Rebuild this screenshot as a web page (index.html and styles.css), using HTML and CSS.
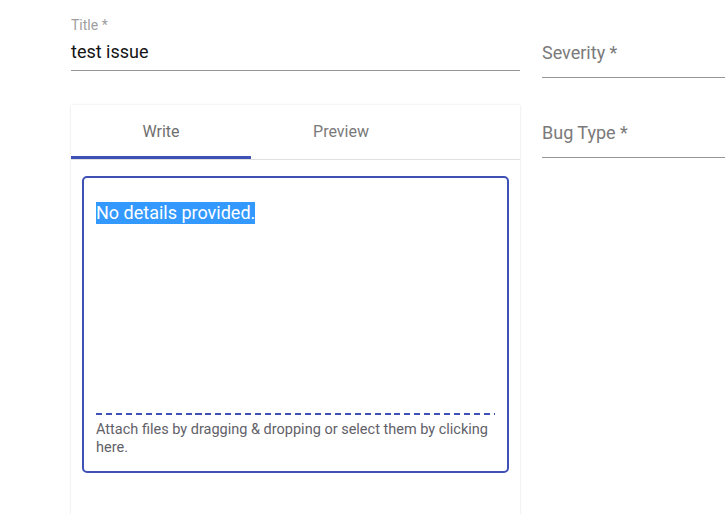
FILE: index.html
```html
<!DOCTYPE html>
<html lang="en">
<head>
<meta charset="utf-8">
<title>New issue</title>
<link rel="stylesheet" href="styles.css">
</head>
<body>
<div class="page">
  <div class="main-col">
    <div class="field title-field">
      <div class="field-label">Title *</div>
      <div class="field-input">test issue</div>
    </div>
    <div class="card">
      <div class="tabs">
        <div class="tab tab-active">Write</div>
        <div class="tab">Preview</div>
      </div>
      <div class="card-body">
        <div class="editor">
          <div class="editor-text"><span class="selected">No details provided.</span></div>
          <div class="dropzone">Attach files by dragging &amp; dropping or select them by clicking here.</div>
        </div>
      </div>
    </div>
  </div>
  <div class="side-col">
    <div class="select-field severity">Severity *</div>
    <div class="select-field bugtype">Bug Type *</div>
  </div>
</div>
</body>
</html>
```
FILE: styles.css
```css
html, body {
  margin: 0;
  padding: 0;
  background: #fff;
  overflow: hidden;
}
body {
  font-family: Roboto, "Noto Sans", "Liberation Sans", sans-serif;
  width: 725px;
  height: 514px;
}
.page {
  display: flex;
  gap: 22px;
  padding-left: 71px;
}
.main-col {
  flex: 0 0 449px;
  display: flex;
  flex-direction: column;
}
.side-col {
  flex: 0 0 300px;
  display: flex;
  flex-direction: column;
}
.title-field {
  padding-top: 17px;
}
.field-label {
  font-size: 14px;
  line-height: 17px;
  color: #9e9e9e;
}
.field-input {
  margin-top: 6px;
  font-size: 18px;
  line-height: 23px;
  color: #141414;
  padding-bottom: 7px;
  border-bottom: 1px solid #949494;
}
.select-field {
  font-size: 18px;
  line-height: 23px;
  color: #7a7a7a;
  padding-bottom: 13px;
  border-bottom: 1px solid #949494;
}
.severity {
  margin-top: 41px;
}
.bugtype {
  margin-top: 43px;
}
.card {
  margin-top: 34px;
  background: #fff;
  box-shadow: 0 0 2px rgba(0, 0, 0, 0.12), 0 1px 1px rgba(0, 0, 0, 0.06);
  height: 420px;
}
.tabs {
  display: flex;
  border-bottom: 1px solid #e0e0e0;
}
.tab {
  width: 180px;
  height: 49px;
  padding-top: 2px;
  display: flex;
  align-items: center;
  justify-content: center;
  font-size: 16px;
  color: #7a7a7a;
  border-bottom: 3px solid transparent;
}
.tab-active {
  border-bottom-color: #3f51b5;
  color: #6f6f6f;
}
.card-body {
  padding: 16px 11px;
}
.editor {
  height: 293px;
  border: 2px solid #3f51b5;
  border-radius: 5px;
  padding: 0 12px;
  display: flex;
  flex-direction: column;
}
.editor-text {
  flex: 1;
  padding-top: 24px;
  border-bottom: 2px solid transparent;
  background-image: repeating-linear-gradient(to right, #3f51b5 0 6px, transparent 6px 9.95px);
  background-size: 100% 2px;
  background-position: left bottom;
  background-repeat: no-repeat;
  background-origin: border-box;
}
.selected {
  display: inline-block;
  font-size: 18px;
  line-height: 22px;
  background: #3399ff;
  color: #fff;
}
.dropzone {
  padding: 6px 0 14px;
  font-size: 14.5px;
  line-height: 18px;
  color: #5f6169;
}
```
